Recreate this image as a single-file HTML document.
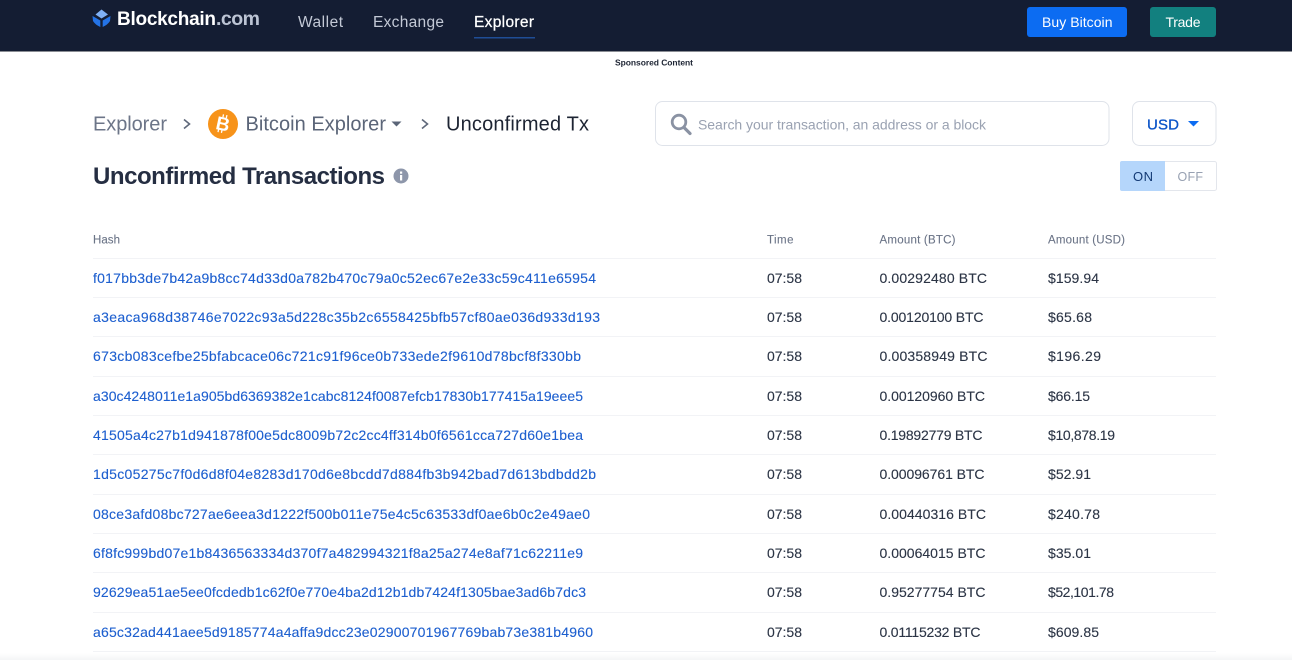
<!DOCTYPE html>
<html lang="en">
<head>
<meta charset="utf-8">
<title>Unconfirmed Transactions</title>
<style>
html,body{margin:0;padding:0;width:1292px;height:660px;overflow:hidden;background:#fff}
svg{display:block;position:absolute;left:0;top:0;filter:blur(.25px)}
text{font-family:"Liberation Sans",sans-serif;white-space:pre}
.h{font-size:14px;fill:#1d5fcf;stroke:#1d5fcf;stroke-width:.12}
.t{font-size:14px;fill:#2b3445;stroke:#2b3445;stroke-width:.12}
.th{font-size:11.5px;fill:#6b7487;stroke:#6b7487;stroke-width:.1}
.l{stroke:#f2f3f6;stroke-width:1}
</style>
</head>
<body>
<svg width="1292" height="660" viewBox="0 0 1292 660" xmlns="http://www.w3.org/2000/svg">
<defs><linearGradient id="g" x1="0" y1="0" x2="0" y2="1"><stop offset="0" stop-color="#fff"/><stop offset="1" stop-color="#f4f5f6"/></linearGradient></defs>
<rect width="1292" height="660" fill="#fff"/>
<rect x="0" y="653" width="1292" height="7" fill="url(#g)"/>
<!-- header -->
<rect width="1292" height="51" fill="#141d33"/>
<rect y="51" width="1292" height="1" fill="#8a8d94"/>
<!-- logo -->
<path d="M101.500 9.500 L108 14.500 L101.500 18.500 L95.500 14.500Z" fill="#7fb0f5"/>
<path d="M92.500 16 L100.300 20.500 L100.300 27 Q95 24.500 93 21Z" fill="#2473e6"/>
<path d="M110.500 16 L102.700 20.500 L102.700 27 Q108 24.500 110 21Z" fill="#2473e6"/>
<text x="117" y="25" font-size="19" font-weight="700" fill="#fff" textLength="99">Blockchain</text>
<text x="216" y="25" font-size="19.500" font-weight="700" fill="#bcc4d4" textLength="44">.com</text>
<text x="298" y="27" font-size="15.500" fill="#c3c9d6" textLength="45">Wallet</text>
<text x="373" y="27" font-size="15.500" fill="#c3c9d6" textLength="71">Exchange</text>
<text x="474" y="27" font-size="15.500" fill="#fff" textLength="60" stroke="#fff" stroke-width=".25">Explorer</text>
<rect x="474" y="37" width="61" height="1.500" fill="#1f4d96"/>
<rect x="1027" y="7" width="100" height="30" rx="3" fill="#0c6cf2"/>
<text x="1042" y="27" font-size="14" fill="#fff" textLength="70.500">Buy Bitcoin</text>
<rect x="1150" y="7" width="66" height="30" rx="3" fill="#12807f"/>
<text x="1165.500" y="27" font-size="14" fill="#fff" textLength="35">Trade</text>
<text x="615" y="65.500" font-size="8.500" font-weight="700" fill="#1d2433" textLength="78">Sponsored Content</text>
<!-- breadcrumb -->
<text x="93" y="130.500" font-size="20" fill="#6c7588" textLength="74">Explorer</text>
<path d="M184 119.500 L189.500 124 L184 128.500" fill="none" stroke="#5f687a" stroke-width="1.600"/>
<circle cx="223" cy="124" r="15" fill="#f7931a"/>
<text x="223" y="130.500" font-size="19" font-weight="700" fill="#fff" text-anchor="middle" transform="rotate(12 223 124)">B</text>
<path d="M221.500 114.500v3M225 114.500v3M219.800 130v3M223.300 130v3" stroke="#fff" stroke-width="1.300" transform="rotate(12 223 124)"/>
<text x="245.500" y="130.500" font-size="20" fill="#5b6578" textLength="140.500">Bitcoin Explorer</text>
<path d="M391.500 121.500 H401.500 L396.500 126.500Z" fill="#5b6578"/>
<path d="M422 119.500 L427.500 124 L422 128.500" fill="none" stroke="#5f687a" stroke-width="1.600"/>
<text x="446" y="130.500" font-size="20" fill="#1d2433" textLength="143">Unconfirmed Tx</text>
<!-- title -->
<text x="93" y="184" font-size="24" font-weight="700" fill="#252e42" textLength="292">Unconfirmed Transactions</text>
<circle cx="401" cy="176" r="7.500" fill="#8d96aa"/>
<rect x="400" y="175" width="2.200" height="5.500" fill="#fff"/>
<rect x="400" y="171.500" width="2.200" height="2.200" fill="#fff"/>
<!-- search -->
<rect x="655.500" y="101.500" width="453.500" height="44" rx="7" fill="#fff" stroke="#dfe3ea"/>
<circle cx="679" cy="122" r="6.800" fill="none" stroke="#8a92a3" stroke-width="2.800"/>
<path d="M684 127.500 L690 133.500" stroke="#8a92a3" stroke-width="3.200" stroke-linecap="round"/>
<text x="698" y="129.500" font-size="14" fill="#9aa2b2" textLength="288">Search your transaction, an address or a block</text>
<rect x="1132.500" y="101.500" width="83.500" height="44" rx="7" fill="#fff" stroke="#dfe3ea"/>
<text x="1147" y="129.500" font-size="15" fill="#0c55c8" stroke="#0c55c8" stroke-width=".3" textLength="32">USD</text>
<path d="M1188 121 H1199 L1193.500 126.500Z" fill="#0c6cf2"/>
<!-- toggle -->
<rect x="1120.500" y="161.500" width="96" height="29" rx="2" fill="#fff" stroke="#e3e6ec"/>
<path d="M1122 161 H1165 V191 H1122 Q1120 191 1120 189 V163 Q1120 161 1122 161Z" fill="#b5d6fb"/>
<text x="1133" y="181" font-size="13" fill="#133a75" textLength="20">ON</text>
<text x="1177.500" y="181" font-size="12.500" fill="#98a1b2" textLength="25.500">OFF</text>
<!-- table head -->
<text class="th" x="93" y="243.500" textLength="27">Hash</text>
<text class="th" x="767" y="243.500" textLength="26.500">Time</text>
<text class="th" x="879.500" y="243.500" textLength="76">Amount (BTC)</text>
<text class="th" x="1048" y="243.500" textLength="77">Amount (USD)</text>
<!-- lines -->
<path class="l" d="M93 258.500H1216M93 297.500H1216M93 336.500H1216M93 376.500H1216M93 415.500H1216M93 454.500H1216M93 494.500H1216M93 533.500H1216M93 572.500H1216M93 612.500H1216M93 651.500H1216"/>
<!-- rows -->
<text class="h" x="93" y="283" textLength="503">f017bb3de7b42a9b8cc74d33d0a782b470c79a0c52ec67e2e33c59c411e65954</text>
<text class="t" x="767" y="283" textLength="35">07:58</text>
<text class="t" x="879.500" y="283" textLength="107.500">0.00292480 BTC</text>
<text class="t" x="1048" y="283" textLength="51">$159.94</text>

<text class="h" x="93" y="322" textLength="507">a3eaca968d38746e7022c93a5d228c35b2c6558425bfb57cf80ae036d933d193</text>
<text class="t" x="767" y="322" textLength="35">07:58</text>
<text class="t" x="879.500" y="322" textLength="104">0.00120100 BTC</text>
<text class="t" x="1048" y="322" textLength="44">$65.68</text>

<text class="h" x="93" y="361" textLength="488">673cb083cefbe25bfabcace06c721c91f96ce0b733ede2f9610d78bcf8f330bb</text>
<text class="t" x="767" y="361" textLength="35">07:58</text>
<text class="t" x="879.500" y="361" textLength="108">0.00358949 BTC</text>
<text class="t" x="1048" y="361" textLength="53">$196.29</text>

<text class="h" x="93" y="401" textLength="490">a30c4248011e1a905bd6369382e1cabc8124f0087efcb17830b177415a19eee5</text>
<text class="t" x="767" y="401" textLength="35">07:58</text>
<text class="t" x="879.500" y="401" textLength="105.500">0.00120960 BTC</text>
<text class="t" x="1048" y="401" textLength="42">$66.15</text>

<text class="h" x="93" y="440" textLength="490">41505a4c27b1d941878f00e5dc8009b72c2cc4ff314b0f6561cca727d60e1bea</text>
<text class="t" x="767" y="440" textLength="35">07:58</text>
<text class="t" x="879.500" y="440" textLength="103">0.19892779 BTC</text>
<text class="t" x="1048" y="440" textLength="67">$10,878.19</text>

<text class="h" x="93" y="479" textLength="503">1d5c05275c7f0d6d8f04e8283d170d6e8bcdd7d884fb3b942bad7d613bdbdd2b</text>
<text class="t" x="767" y="479" textLength="35">07:58</text>
<text class="t" x="879.500" y="479" textLength="105">0.00096761 BTC</text>
<text class="t" x="1048" y="479" textLength="43">$52.91</text>

<text class="h" x="93" y="519" textLength="497">08ce3afd08bc727ae6eea3d1222f500b011e75e4c5c63533df0ae6b0c2e49ae0</text>
<text class="t" x="767" y="519" textLength="35">07:58</text>
<text class="t" x="879.500" y="519" textLength="106.500">0.00440316 BTC</text>
<text class="t" x="1048" y="519" textLength="52">$240.78</text>

<text class="h" x="93" y="558" textLength="490">6f8fc999bd07e1b8436563334d370f7a482994321f8a25a274e8af71c62211e9</text>
<text class="t" x="767" y="558" textLength="35">07:58</text>
<text class="t" x="879.500" y="558" textLength="106">0.00064015 BTC</text>
<text class="t" x="1048" y="558" textLength="43">$35.01</text>

<text class="h" x="93" y="597" textLength="493">92629ea51ae5ee0fcdedb1c62f0e770e4ba2d12b1db7424f1305bae3ad6b7dc3</text>
<text class="t" x="767" y="597" textLength="35">07:58</text>
<text class="t" x="879.500" y="597" textLength="106">0.95277754 BTC</text>
<text class="t" x="1048" y="597" textLength="66">$52,101.78</text>

<text class="h" x="93" y="637" textLength="500">a65c32ad441aee5d9185774a4affa9dcc23e02900701967769bab73e381b4960</text>
<text class="t" x="767" y="637" textLength="35">07:58</text>
<text class="t" x="879.500" y="637" textLength="101">0.01115232 BTC</text>
<text class="t" x="1048" y="637" textLength="51">$609.85</text>
</svg>
</body>
</html>
